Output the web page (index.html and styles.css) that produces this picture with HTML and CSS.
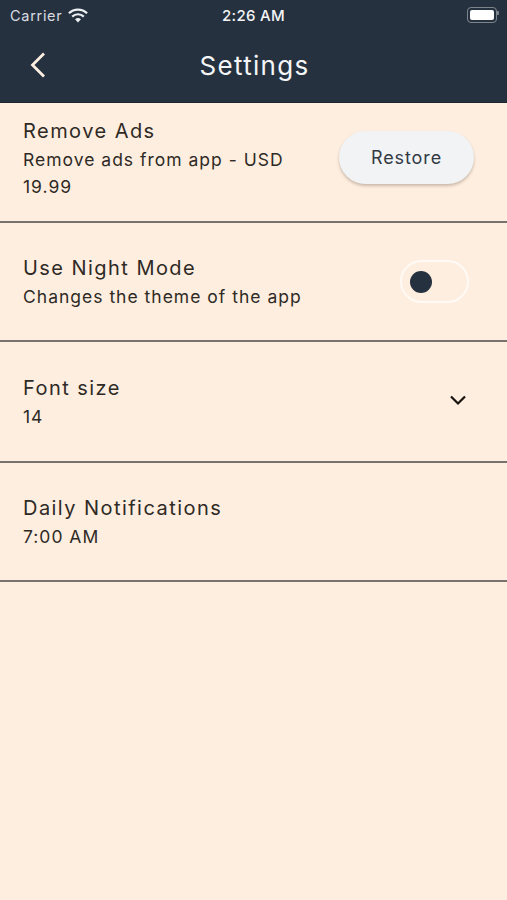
FILE: index.html
```html
<!DOCTYPE html>
<html lang="en">
<head>
  <meta charset="UTF-8">
  <meta name="viewport" content="width=device-width, initial-scale=1.0">
  <title>Settings</title>
  <link rel="stylesheet" href="styles.css">
</head>
<body>

  <header class="header">
    <div class="status-bar">
      <div class="status-left">
        <span>Carrier</span>
        <svg class="wifi" viewBox="0 0 22 16" width="20" height="15">
          <path d="M1 5.6a14.4 14.4 0 0 1 20 0" fill="none" stroke="#eef0f2" stroke-width="2.4"/>
          <path d="M4.6 9.2a9.3 9.3 0 0 1 12.8 0" fill="none" stroke="#eef0f2" stroke-width="2.4"/>
          <path d="M11 15.6l-3.2-3.4a4.6 4.6 0 0 1 6.4 0z" fill="#eef0f2"/>
        </svg>
      </div>
      <span class="status-time">2:26 AM</span>
      <div class="battery"><div class="battery-level"></div></div>
    </div>
    <div class="nav-bar">
      <button class="back" aria-label="Back">
        <svg viewBox="0 0 18 28" width="18" height="28">
          <path d="M15 2.5L3.5 14 15 25.5" fill="none" stroke="#fdeee0" stroke-width="2.8"/>
        </svg>
      </button>
      <h1 class="title">Settings</h1>
    </div>
  </header>

  <main class="settings">
    <section class="row row-ads">
      <div class="row-text">
        <div class="row-title">Remove Ads</div>
        <div class="row-sub">Remove ads from app - USD 19.99</div>
      </div>
      <button class="restore">Restore</button>
    </section>

    <section class="row row-night">
      <div class="row-text">
        <div class="row-title">Use Night Mode</div>
        <div class="row-sub">Changes the theme of the app</div>
      </div>
      <div class="toggle"><div class="knob"></div></div>
    </section>

    <section class="row row-font">
      <div class="row-text">
        <div class="row-title">Font size</div>
        <div class="row-sub">14</div>
      </div>
      <svg class="chevron" viewBox="0 0 18 12" width="18" height="12">
        <path d="M2 2.5l7 7 7-7" fill="none" stroke="#15120f" stroke-width="2.2"/>
      </svg>
    </section>

    <section class="row row-daily">
      <div class="row-text">
        <div class="row-title">Daily Notifications</div>
        <div class="row-sub">7:00 AM</div>
      </div>
    </section>
  </main>

</body>
</html>
```

FILE: styles.css
```css
body {
  margin: 0;
  height: 900px;
  overflow: hidden;
  background: #feeedf;
  font-family: Inter, Roboto, sans-serif;
  color: #2e2a26;
}

.header {
  height: 103px;
  box-sizing: border-box;
  background: #263140;
  border-bottom: 1px solid #1b2530;
  color: #f4f5f6;
}

.status-bar {
  height: 30px;
  display: flex;
  align-items: center;
  justify-content: space-between;
  padding: 0 10px 0 10px;
  font-size: 14.5px;
  position: relative;
}

.status-left {
  display: flex;
  align-items: center;
  gap: 6px;
  color: #d9dce0;
  letter-spacing: 0.7px;
}

.status-time {
  position: absolute;
  left: 222px;
  font-weight: 500;
  font-size: 15px;
  letter-spacing: 0.3px;
}

.battery {
  width: 24px;
  height: 10px;
  padding: 2px;
  border: 1px solid #7d848c;
  border-radius: 4px;
  position: relative;
}

.battery::after {
  content: "";
  position: absolute;
  right: -3px;
  top: 3px;
  width: 2px;
  height: 4px;
  background: #7d848c;
  border-radius: 0 1px 1px 0;
}

.battery-level {
  height: 100%;
  background: #fff;
  border-radius: 2px;
}

.nav-bar {
  height: 72px;
  display: flex;
  align-items: center;
  justify-content: center;
  position: relative;
}

.back {
  position: absolute;
  left: 29px;
  top: 21px;
  padding: 0;
  border: none;
  background: none;
  display: flex;
}

.title {
  margin: 0 0 2px 2px;
  font-size: 26px;
  font-weight: 400;
  letter-spacing: 1.3px;
}

.row {
  display: flex;
  justify-content: space-between;
  padding: 15px 33px 0 23px;
  border-bottom: 2px solid #77726d;
  box-sizing: border-box;
  height: 119px;
}

.row-ads {
  height: 120px;
}

.row-night {
  padding-top: 32px;
}

.row-font {
  padding-top: 33px;
  height: 121px;
}

.row-daily {
  padding-top: 32px;
}

.row-text {
  width: 280px;
}

.row-title {
  font-size: 20px;
  line-height: 26px;
  letter-spacing: 1.45px;
}

.row-sub {
  margin-top: 2px;
  font-size: 17.5px;
  line-height: 27px;
  letter-spacing: 1px;
}

.restore {
  width: 135px;
  height: 53px;
  margin-top: 13px;
  padding-bottom: 1px;
  border: none;
  border-radius: 27px;
  background: #f1f3f5;
  box-shadow: 0 2px 3px rgba(90, 70, 50, 0.3);
  color: #333a44;
  font-family: inherit;
  font-size: 18px;
  font-weight: 400;
  letter-spacing: 0.9px;
}

.toggle {
  width: 69px;
  height: 43px;
  margin: 5px 5px 0 0;
  border: 2px solid #fffaf5;
  border-radius: 22px;
  box-sizing: border-box;
  display: flex;
  align-items: center;
  padding-left: 8px;
}

.knob {
  width: 22px;
  height: 22px;
  border-radius: 50%;
  background: #263140;
}

.chevron {
  margin: 19px 7px 0 0;
}
```
